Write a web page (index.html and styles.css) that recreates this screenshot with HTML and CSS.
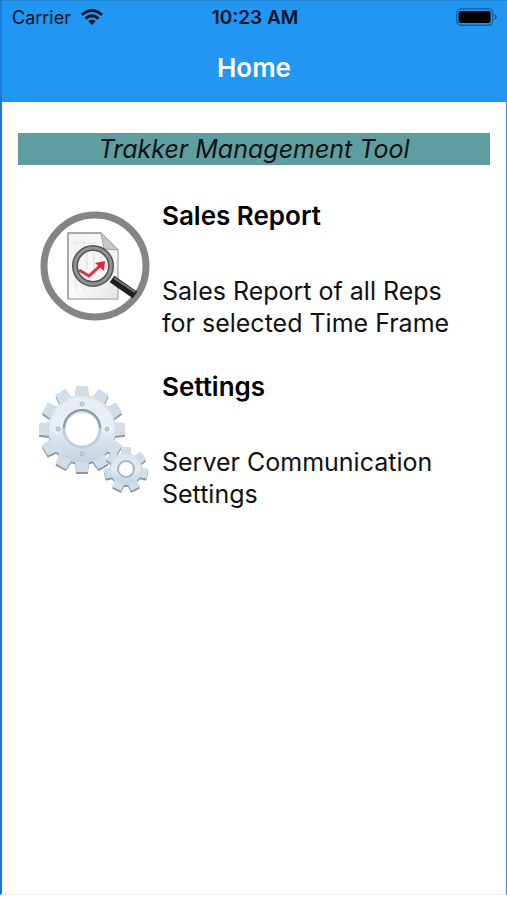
FILE: index.html
```html
<!DOCTYPE html>
<html lang="en">
<head>
    <meta charset="UTF-8">
    <meta name="viewport" content="width=device-width, initial-scale=1.0">
    <title>Home</title>
    <link rel="stylesheet" href="styles.css">
</head>
<body>
    <div class="screen">
        <header class="header">
            <div class="status-bar">
                <div class="status-left">
                    <span>Carrier</span>
                    <svg class="wifi" viewBox="0 0 22 16" aria-hidden="true">
                        <g fill="none" stroke="#06121f" stroke-width="2.8">
                            <path d="M1 5.8 Q11 -2.8 21 5.8"/>
                            <path d="M4.6 9.6 Q11 4 17.4 9.6"/>
                        </g>
                        <path d="M7.4 12.2 Q11 9.4 14.6 12.2 L11 16 Z" fill="#06121f"/>
                    </svg>
                </div>
                <div class="status-time">10:23 AM</div>
                <div class="status-right">
                    <svg class="battery" viewBox="0 0 42 18" aria-hidden="true">
                        <rect x="0.7" y="0.7" width="36" height="16.6" rx="4.5" fill="none" stroke="#17609d" stroke-width="1.4"/>
                        <rect x="2.6" y="3" width="32" height="12" rx="2" fill="#000"/>
                        <path d="M38.7 6 Q41 7 41 9 Q41 11 38.7 12 Z" fill="#17609d"/>
                    </svg>
                </div>
            </div>
            <h1 class="title">Home</h1>
        </header>

        <main class="content">
            <h2 class="banner">Trakker Management Tool</h2>

            <nav class="menu">
                <a class="menu-item" href="#sales-report">
                    <svg class="menu-icon" viewBox="0 0 120 120" aria-hidden="true">
                        <defs>
                            <linearGradient id="paper" x1="0" y1="0" x2="1" y2="1">
                                <stop offset="0" stop-color="#f1f1f1"/>
                                <stop offset="0.5" stop-color="#fafafa"/>
                                <stop offset="1" stop-color="#e4e4e4"/>
                            </linearGradient>
                        </defs>
                        <circle cx="59" cy="59" r="51" fill="#fff" stroke="#858585" stroke-width="7"/>
                        <path d="M32 26 H65 L82 43 V92 H32 Z" fill="url(#paper)" stroke="#b5b5b5" stroke-width="1.5"/>
                        <path d="M32 92 V26 H65" fill="none" stroke="#8e8e8e"/>
                        <path d="M65 26 L68 42 L82 43 Z" fill="#c8c8c8" stroke="#a0a0a0"/>
                        <path d="M40 33 V84 M48 33 V84 M37 36 H60" stroke="#e6e6e6"/>
                        <!-- magnifier -->
                        <path d="M76 72 L99 88" stroke="#1f1f1f" stroke-width="8"/>
                        <path d="M78 71 L99 85" stroke="#777" stroke-width="2"/>
                        <circle cx="57" cy="59" r="18" fill="#f6f6f6" stroke="#555" stroke-width="6"/>
                        <circle cx="57" cy="59" r="18" fill="none" stroke="#929292" stroke-width="3"/>
                        <path d="M51 46 V62 M58 46 V66 M65 49 V54" stroke="#dcdce0"/>
                        <path d="M43 63 L53 69 L66 57" fill="none" stroke="#e32b43" stroke-width="3"/>
                        <path d="M59 56 L69 54 L68 64 Z" fill="#e9243d"/>
                    </svg>
                    <div class="menu-text">
                        <h3>Sales Report</h3>
                        <p>Sales Report of all Reps for selected Time Frame</p>
                    </div>
                </a>

                <a class="menu-item" href="#settings">
                    <svg class="menu-icon" viewBox="0 0 120 120" aria-hidden="true">
                        <defs>
                            <linearGradient id="metal" x1="0" y1="0" x2="0" y2="1">
                                <stop offset="0" stop-color="#dde4ea"/>
                                <stop offset="0.5" stop-color="#e3ebf3"/>
                                <stop offset="1" stop-color="#c2d3e1"/>
                            </linearGradient>
                            <path id="tooth" d="M-7 -32 L-6 -42 Q-6 -43 -5 -43 H5 Q6 -43 6 -42 L7 -32 Z"/>
                            <path id="tooth-small" d="M-5 -14 L-5 -21 Q-5 -22 -4 -22 H4 Q5 -22 5 -21 L5 -14 Z"/>
                            <g id="gear">
                                <circle r="34"/>
                                <use href="#tooth"/>
                                <use href="#tooth" transform="rotate(30)"/>
                                <use href="#tooth" transform="rotate(60)"/>
                                <use href="#tooth" transform="rotate(90)"/>
                                <use href="#tooth" transform="rotate(120)"/>
                                <use href="#tooth" transform="rotate(150)"/>
                                <use href="#tooth" transform="rotate(180)"/>
                                <use href="#tooth" transform="rotate(210)"/>
                                <use href="#tooth" transform="rotate(240)"/>
                                <use href="#tooth" transform="rotate(270)"/>
                                <use href="#tooth" transform="rotate(300)"/>
                                <use href="#tooth" transform="rotate(330)"/>
                            </g>
                            <g id="gear-small">
                                <circle r="16"/>
                                <use href="#tooth-small"/>
                                <use href="#tooth-small" transform="rotate(51.4)"/>
                                <use href="#tooth-small" transform="rotate(102.8)"/>
                                <use href="#tooth-small" transform="rotate(154.3)"/>
                                <use href="#tooth-small" transform="rotate(205.7)"/>
                                <use href="#tooth-small" transform="rotate(257.1)"/>
                                <use href="#tooth-small" transform="rotate(308.6)"/>
                            </g>
                        </defs>
                        <!-- large gear over its lower edge -->
                        <use href="#gear" x="46" y="53" fill="#8597a8"/>
                        <use href="#gear" x="46" y="51" fill="#d2dde7"/>
                        <circle cx="46" cy="51" r="33" fill="url(#metal)"/>
                        <path d="M14 51 A32 32 0 0 1 78 51 L70 58 A25 25 0 0 0 22 58 Z" fill="#eef2f5" opacity="0.6"/>
                        <circle cx="46" cy="51" r="18" fill="#fff" stroke="#c0cedb" stroke-width="3"/>
                        <path d="M28 50 A18 18 0 0 1 64 50" fill="none" stroke="#8798a7" stroke-width="2"/>
                        <g fill="#c6d3de" stroke="#a6b7c5">
                            <circle cx="46" cy="26" r="2"/>
                            <circle cx="22" cy="51" r="2"/>
                            <circle cx="71" cy="51" r="2"/>
                            <circle cx="46" cy="76" r="2"/>
                        </g>
                        <!-- small gear -->
                        <use href="#gear-small" x="90" y="93" fill="#8597a8"/>
                        <use href="#gear-small" x="90" y="91" fill="#d2dde7"/>
                        <circle cx="90" cy="91" r="15" fill="url(#metal)"/>
                        <circle cx="90" cy="91" r="8" fill="#fff" stroke="#a5b6c5" stroke-width="2"/>
                    </svg>
                    <div class="menu-text">
                        <h3>Settings</h3>
                        <p>Server Communication Settings</p>
                    </div>
                </a>
            </nav>
        </main>
    </div>
</body>
</html>
```
FILE: styles.css
```css
* {
    box-sizing: border-box;
}
body {
    margin: 0;
    background-color: #fff;
    color: #111;
    font-family: Inter, "Liberation Sans", sans-serif;
}
h1, h2, h3, p {
    margin: 0;
}
.screen {
    min-height: calc(100vh - 5px);
    border-left: 2px solid #1b78dc;
    border-right: 1px solid #3b8be0;
    border-bottom: 1px solid #eee;
}
.header {
    background-color: #2196f3;
    border-top: 1px solid #1f86d6;
    padding-bottom: 18px;
}
.status-bar {
    display: grid;
    grid-template-columns: 1fr auto 1fr;
    align-items: center;
    height: 32px;
    padding: 0 8px 0 10px;
    font-size: 18px;
    color: #06121f;
}
.status-left {
    display: flex;
    align-items: center;
    gap: 10px;
}
.status-time {
    font-size: 19px;
    font-weight: 600;
}
.status-right {
    display: flex;
    justify-content: flex-end;
}
.wifi {
    width: 22px;
    height: 16px;
}
.battery {
    width: 42px;
    height: 18px;
}
.title {
    margin-top: 19px;
    font-size: 26px;
    font-weight: 600;
    line-height: 32px;
    text-align: center;
    color: #fff;
}
.content {
    padding: 31px 16px;
}
.banner {
    background-color: #5f9ea0;
    font-size: 25px;
    font-style: italic;
    font-weight: 400;
    line-height: 32px;
    text-align: center;
}
.menu {
    padding: 35px 16px 0 18px;
}
.menu-item {
    display: flex;
    gap: 6px;
    margin-bottom: 32px;
    color: #111;
    text-decoration: none;
}
.menu-icon {
    flex: none;
    width: 120px;
    height: 120px;
    margin-top: 7px;
}
.menu-text {
    font-size: 25px;
    line-height: 32px;
}
.menu-text h3 {
    margin-bottom: 43px;
    font-size: 26px;
    font-weight: 600;
    color: #000;
}
```
